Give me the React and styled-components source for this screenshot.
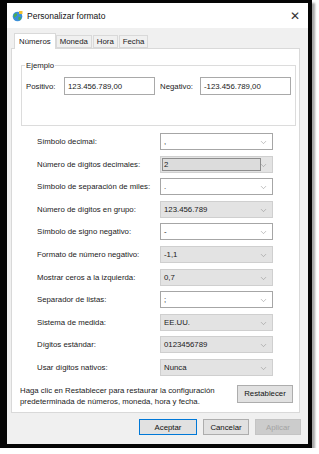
import styled, { createGlobalStyle } from 'styled-components';
import { ChevronDown } from 'lucide-react';

const GlobalStyle = createGlobalStyle`
  html, body {
    margin: 0;
    padding: 0;
    background: #fff;
  }
  body {
    font-family: "Liberation Sans", Arial, sans-serif;
    font-size: 7.8px;
    color: #1a1a1a;
  }
`;

const Frame = styled.div`
  box-sizing: border-box;
  width: 312px;
  height: 448px;
  border-style: solid;
  border-color: #050505;
  border-width: 3px 4px 4px 7px;
  box-shadow: 3px 3px 2px rgba(0, 0, 0, 0.35);
`;

const Dialog = styled.div`
  display: flex;
  flex-direction: column;
  height: 100%;
  background: #f0f0f0;
`;

const TitleBar = styled.div`
  display: flex;
  align-items: center;
  height: 25px;
  padding: 0 8px 0 5px;
  background: #fff;
  font-size: 8.5px;
  color: #111;
`;

const Title = styled.span`
  flex: 1;
  margin-left: 4px;
`;

const Close = styled.span`
  font-size: 12px;
  color: #333;
  font-family: "DejaVu Sans", sans-serif;
  font-weight: 300;
`;

const TabStrip = styled.div`
  display: flex;
  align-items: flex-end;
  height: 20px;
  padding-left: 7px;
`;

const Tab = styled.div`
  box-sizing: border-box;
  display: flex;
  align-items: center;
  height: ${({ $active }) => ($active ? '16px' : '13px')};
  padding: 0 ${({ $active }) => ($active ? '4px' : '3px')};
  margin: 0 ${({ $active }) => ($active ? '0' : '1px')} ${({ $active }) => ($active ? '-1px' : '0')} 0;
  background: ${({ $active }) => ($active ? '#fff' : '#f0f0f0')};
  border: 1px solid #d9d9d9;
  border-bottom: ${({ $active }) => ($active ? 'none' : '1px solid #d9d9d9')};
  position: relative;
  z-index: ${({ $active }) => ($active ? 1 : 0)};
`;

const Panel = styled.div`
  box-sizing: border-box;
  display: flex;
  flex-direction: column;
  height: 365px;
  margin: 0 8px 0 4px;
  background: #fff;
  border: 1px solid #d9d9d9;
`;

const Group = styled.fieldset`
  box-sizing: border-box;
  height: 65px;
  margin: 12px 4px 0 9px;
  padding: 7px 4px 0;
  border: 1px solid #dcdcdc;
`;

const Legend = styled.legend`
  padding: 0 1px;
  margin-left: -1px;
`;

const SampleRow = styled.div`
  display: flex;
  align-items: center;
`;

const SampleLabel = styled.span`
  width: ${({ $w }) => $w}px;
  margin-left: ${({ $gap }) => $gap || 0}px;
`;

const SampleBox = styled.div`
  box-sizing: border-box;
  display: flex;
  align-items: center;
  width: 91px;
  height: 18px;
  padding-left: 3px;
  border: 1px solid #a9a9a9;
  background: #fff;
`;

const Settings = styled.div`
  display: flex;
  flex-direction: column;
  gap: 5.6px;
  margin-top: 7px;
  padding-left: 25px;
`;

const Row = styled.div`
  display: flex;
  align-items: center;
  height: 17px;
`;

const Label = styled.span`
  width: 123px;
`;

const Combo = styled.div`
  box-sizing: border-box;
  position: relative;
  display: flex;
  align-items: center;
  width: 113px;
  height: 17px;
  padding-left: 3px;
  background: ${({ $kind }) => ($kind === 'edit' ? '#fff' : '#e3e3e3')};
  border: 1px solid ${({ $kind }) => ($kind === 'edit' ? '#a6a6a6' : '#cfcfcf')};
`;

const FocusBox = styled.div`
  box-sizing: border-box;
  display: flex;
  align-items: center;
  width: 99px;
  height: 13px;
  margin-left: -2px;
  padding-left: 1px;
  border: 1px solid #8c8c8c;
  background: #dcdcdc;
`;

const Arrow = styled(ChevronDown)`
  position: absolute;
  right: 4px;
  top: 4px;
  color: #8a8a8a;
`;

const Footer = styled.div`
  display: flex;
  align-items: flex-start;
  justify-content: space-between;
  margin-top: 9px;
  padding: 0 6px 0 8px;
  line-height: 11px;
`;

const Button = styled.button`
  box-sizing: border-box;
  width: ${({ $w }) => $w || 46}px;
  height: ${({ $h }) => $h || 16}px;
  padding: 0;
  font-family: inherit;
  font-size: 7.8px;
  color: ${({ $disabled }) => ($disabled ? '#a3a3a3' : '#111')};
  background: ${({ $disabled }) => ($disabled ? '#cccccc' : '#e1e1e1')};
  border: 1px solid ${({ $primary, $disabled }) => ($primary ? '#0078d7' : $disabled ? '#c4c4c4' : '#adadad')};
`;

const ButtonBar = styled.div`
  display: flex;
  justify-content: flex-end;
  gap: 6px;
  padding: 6px 7px 0 0;
`;

const Globe = () => (
  <svg width="11" height="12" viewBox="0 0 11 12">
    <circle cx="5.5" cy="6.5" r="4.8" fill="#3b8fd9" />
    <path d="M3 3.5 C4.5 3 5.5 4 5 5.5 C4.5 6.5 3 6.5 2.5 8 C1.5 7 1.2 5 3 3.5Z" fill="#4caf50" />
    <path d="M6.5 7 C8 6.5 9.5 7.5 9 9 C8 10.5 6.5 10.5 6.2 9Z" fill="#4caf50" />
    <path d="M7 1 L10.5 1 L10.5 4 L7 4Z" fill="#f2c230" />
  </svg>
);

const settings = [
  ['Símbolo decimal:', ',', 'edit'],
  ['Número de dígitos decimales:', '2', 'focus'],
  ['Símbolo de separación de miles:', '.', 'edit'],
  ['Número de dígitos en grupo:', '123.456.789', 'list'],
  ['Símbolo de signo negativo:', '-', 'edit'],
  ['Formato de número negativo:', '-1,1', 'list'],
  ['Mostrar ceros a la izquierda:', '0,7', 'list'],
  ['Separador de listas:', ';', 'edit'],
  ['Sistema de medida:', 'EE.UU.', 'list'],
  ['Dígitos estándar:', '0123456789', 'list'],
  ['Usar dígitos nativos:', 'Nunca', 'list'],
];

export default function App() {
  return (
    <>
      <GlobalStyle />
      <Frame>
        <Dialog>
          <TitleBar>
            <Globe />
            <Title>Personalizar formato</Title>
            <Close>✕</Close>
          </TitleBar>

          <TabStrip>
            <Tab $active>Números</Tab>
            <Tab>Moneda</Tab>
            <Tab>Hora</Tab>
            <Tab>Fecha</Tab>
          </TabStrip>

          <Panel>
            <Group>
              <Legend>Ejemplo</Legend>
              <SampleRow>
                <SampleLabel $w={38}>Positivo:</SampleLabel>
                <SampleBox>123.456.789,00</SampleBox>
                <SampleLabel $w={40} $gap={5}>Negativo:</SampleLabel>
                <SampleBox>-123.456.789,00</SampleBox>
              </SampleRow>
            </Group>

            <Settings>
              {settings.map(([label, value, kind]) => (
                <Row key={label}>
                  <Label>{label}</Label>
                  <Combo $kind={kind}>
                    {kind === 'focus' ? <FocusBox>{value}</FocusBox> : value}
                    <Arrow size={9} strokeWidth={1.4} />
                  </Combo>
                </Row>
              ))}
            </Settings>

            <Footer>
              <span>
                Haga clic en Restablecer para restaurar la configuración
                <br />
                predeterminada de números, moneda, hora y fecha.
              </span>
              <Button $w={56} $h={18}>Restablecer</Button>
            </Footer>
          </Panel>

          <ButtonBar>
            <Button $primary $w={58}>Aceptar</Button>
            <Button>Cancelar</Button>
            <Button $disabled>Aplicar</Button>
          </ButtonBar>
        </Dialog>
      </Frame>
    </>
  );
}
